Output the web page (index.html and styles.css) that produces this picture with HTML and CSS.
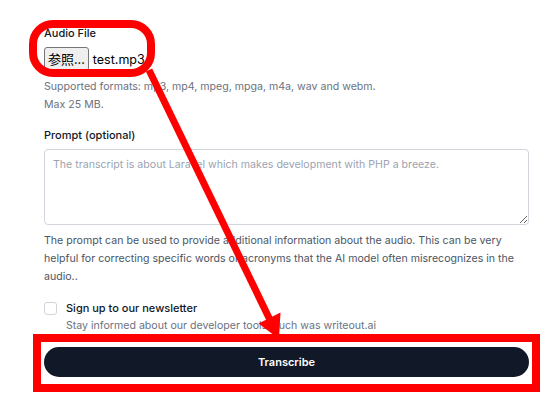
FILE: index.html
```html
<!DOCTYPE html>
<html lang="en">
<head>
    <meta charset="UTF-8">
    <meta name="viewport" content="width=device-width, initial-scale=1.0">
    <title>Transcribe</title>
    <link rel="stylesheet" href="styles.css">
</head>
<body>

<form class="transcribe-form">
    <div class="field">
        <label class="label">Audio File</label>
        <div class="file-input">
            <span class="file-button">参照...</span>
            <span class="file-name">test.mp3</span>
        </div>
        <p class="hint">Supported formats: mp3, mp4, mpeg, mpga, m4a, wav and webm.<br>Max 25 MB.</p>
    </div>

    <div class="field">
        <label class="label">Prompt (optional)</label>
        <textarea class="prompt" placeholder="The transcript is about Laravel which makes development with PHP a breeze."></textarea>
        <p class="help">The prompt can be used to provide additional information about the audio. This can be very helpful for correcting specific words or acronyms that the AI model often misrecognizes in the audio..</p>
    </div>

    <div class="newsletter">
        <span class="checkbox"></span>
        <div>
            <div class="newsletter-title">Sign up to our newsletter</div>
            <div class="newsletter-text">Stay informed about our developer tools, such was writeout.ai</div>
        </div>
    </div>

    <button type="button" class="submit">Transcribe</button>
</form>

<!-- red annotation drawn over the page -->
<svg class="annotation" width="560" height="395" viewBox="0 0 560 395">
    <rect x="33" y="24" width="118" height="49" rx="20" fill="none" stroke="#ff0000" stroke-width="8"/>
    <line x1="149" y1="70" x2="271" y2="322" stroke="#ff0000" stroke-width="7"/>
    <polygon points="279,339 258.5,323.5 280.5,312.5" fill="#ff0000"/>
    <rect x="37" y="338" width="499" height="50" fill="none" stroke="#ff0000" stroke-width="8"/>
</svg>

</body>
</html>
```

FILE: styles.css
```css
html,
body {
    min-height: 395px;
}
body {
    margin: 0;
    font-family: Inter, "Noto Sans", sans-serif;
    background-color: #ffffff;
    color: #111827;
    position: relative;
}
.transcribe-form {
    width: 485px;
    padding: 25px 0 18px 44px;
}
.field {
    margin-bottom: 13px;
}
.label {
    display: block;
    font-size: 11px;
    font-weight: 500;
    line-height: 16px;
}
.file-input {
    display: flex;
    align-items: center;
    gap: 4px;
    margin-top: 6px;
}
.file-button {
    display: inline-block;
    padding: 2px 3px;
    font-family: "Noto Sans CJK JP", sans-serif;
    font-size: 13px;
    line-height: 18px;
    background-color: #efefef;
    border: 1px solid #767676;
    border-radius: 3px;
    color: #000000;
}
.file-name {
    font-size: 12.5px;
    color: #000000;
}
.hint,
.help {
    margin: 7px 0 0;
    font-size: 10.6px;
    line-height: 18px;
    color: #6b7280;
}
.help {
    color: #4b5563;
}
.prompt {
    display: block;
    box-sizing: border-box;
    width: 100%;
    height: 76px;
    margin-top: 6px;
    padding: 6px 8px;
    font-family: inherit;
    font-size: 10.6px;
    line-height: 18px;
    border: 1px solid #d1d5db;
    border-radius: 4px;
}
.prompt::placeholder {
    color: #9ca3af;
}
.newsletter {
    display: flex;
    gap: 9px;
    margin-top: 10px;
}
.checkbox {
    flex: none;
    width: 11px;
    height: 11px;
    margin-top: 3px;
    border: 1px solid #d1d5db;
    border-radius: 3px;
}
.newsletter-title {
    font-size: 11px;
    font-weight: 500;
    line-height: 18px;
}
.newsletter-text {
    font-size: 10.6px;
    line-height: 18px;
    color: #6b7280;
}
.submit {
    display: block;
    width: 100%;
    height: 30px;
    margin-top: 12px;
    border: none;
    border-radius: 15px;
    background-color: #111827;
    color: #ffffff;
    font-family: inherit;
    font-size: 11px;
    font-weight: 600;
}
.annotation {
    position: absolute;
    top: 0;
    left: 0;
    pointer-events: none;
}
```
